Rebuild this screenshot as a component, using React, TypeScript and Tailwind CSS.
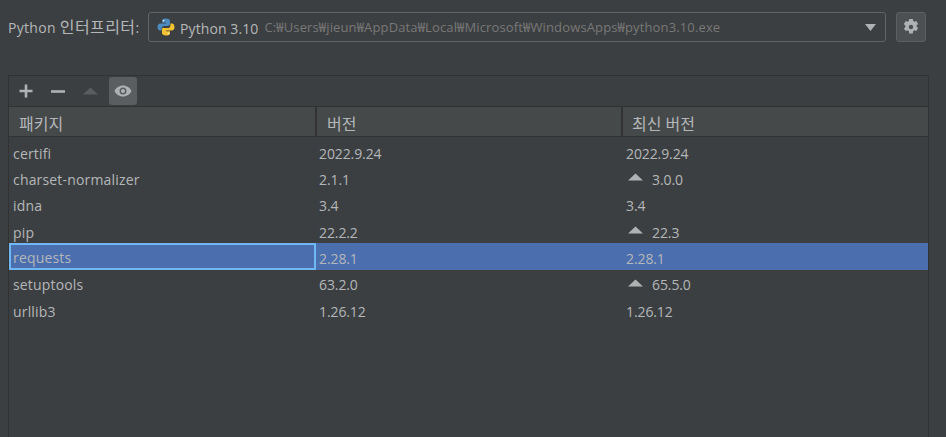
const font = { fontFamily: '"Open Sans", "Noto Sans CJK KR", sans-serif' };

const packages = [
  { name: 'certifi', version: '2022.9.24', latest: '2022.9.24' },
  { name: 'charset-normalizer', version: '2.1.1', latest: '3.0.0', upgrade: true },
  { name: 'idna', version: '3.4', latest: '3.4' },
  { name: 'pip', version: '22.2.2', latest: '22.3', upgrade: true },
  { name: 'requests', version: '2.28.1', latest: '2.28.1', selected: true },
  { name: 'setuptools', version: '63.2.0', latest: '65.5.0', upgrade: true },
  { name: 'urllib3', version: '1.26.12', latest: '1.26.12' },
];

function PythonLogo() {
  return (
    <svg width="18" height="18" viewBox="0 0 18 18">
      <path d="M8.9 0.5C5.2 0.5 5 2 5 3v1.8h4v.7H3.1C1.5 5.5 0.5 6.9 0.5 9s1 3.6 2.6 3.6H4.6v-2c0-1.5 1.2-2.7 2.7-2.7h3.6c1.2 0 2.1-1 2.1-2.2V3c0-1.3-1.3-2.5-4.1-2.5z" fill="#4b8bbe" />
      <circle cx="6.6" cy="2.6" r="0.8" fill="#e8eef2" />
      <path d="M9.1 17.5c3.7 0 3.9-1.5 3.9-2.5v-1.8H9v-.7h5.9c1.6 0 2.6-1.4 2.6-3.5s-1-3.6-2.6-3.6h-1.5v2c0 1.5-1.2 2.7-2.7 2.7H7.1C5.9 9.1 5 10.1 5 11.3V15c0 1.3 1.3 2.5 4.1 2.5z" fill="#f2c230" />
      <circle cx="11.4" cy="15.4" r="0.8" fill="#f5efd5" />
    </svg>
  );
}

function Gear() {
  return (
    <svg width="16" height="16" viewBox="0 0 16 16">
      <path
        fillRule="evenodd"
        d="M6.2 0h3.6l.4 2.1 1.1.6 2-.7 1.8 3.1-1.6 1.4v1l1.6 1.400-1.800 3.100-2-.7-1.100.6-.4 2.500H6.200l-.4-2.500-1.100-.6-2 .7L.9 9.500l1.600-1.400v-1L.9 5.100 2.700 2l2 .7 1.100-.6zM8 5.800a2.200 2.200 0 1 0 0 4.400 2.200 2.200 0 0 0 0-4.400z"
        fill="#afb1b3"
      />
    </svg>
  );
}

function UpArrow({ color = '#afb1b3' }: { color?: string }) {
  return (
    <svg width="15" height="8" viewBox="0 0 15 8">
      <path d="M7.5 0.5L15 7.5H0z" fill={color} />
    </svg>
  );
}

function Eye() {
  return (
    <svg width="18" height="12" viewBox="0 0 18 12">
      <path
        fillRule="evenodd"
        d="M9 0.5c3.8 0 7 2.3 8.5 5.5-1.5 3.2-4.7 5.500-8.500 5.500S2 9.200 0.500 6C2 2.800 5.200 0.500 9 0.500zM9 2.500a3.500 3.500 0 1 0 0 7 3.500 3.500 0 0 0 0-7z"
        fill="#afb1b3"
      />
      <circle cx="9" cy="6" r="2" fill="#afb1b3" />
    </svg>
  );
}

export default function App() {
  return (
    <div className="w-[946px] h-[437px] bg-[#3c3f41] overflow-hidden flex flex-col text-[14px] text-[#b4b7b9]" style={font}>
      <div className="flex items-center pl-2 pt-3 h-[42px]">
        <span className="w-[140px] whitespace-nowrap tracking-[0.3px]">
          Python <span className="text-[16px] tracking-[0.4px]">인터프리터</span>:
        </span>
        <div className="w-[738px] h-[30px] flex items-center border border-[#646464] rounded-[3px] bg-[#3c3f41] pl-[8px] pr-[9px]">
          <PythonLogo />
          <span className="ml-[5px] pt-[2px] whitespace-nowrap tracking-[0.1px]">Python 3.10</span>
          <span className="ml-[6px] pt-[2px] text-[13px] tracking-[0.14px] text-[#787878] whitespace-nowrap">C:₩Users₩jieun₩AppData₩Local₩Microsoft₩WindowsApps₩python3.10.exe</span>
          <svg className="ml-auto" width="11" height="7" viewBox="0 0 11 7">
            <path d="M0 0h11L5.5 7z" fill="#afb1b3" />
          </svg>
        </div>
        <button className="ml-[10px] w-[30px] h-[30px] flex items-center justify-center rounded-[3px] border border-[#5e6060] bg-[#4c5052]">
          <Gear />
        </button>
      </div>

      <div className="mt-[33px] ml-2 w-[921px] flex-1 border border-[#323232] border-b-0 flex flex-col">
        <div className="h-[30px] flex items-center gap-[4px] pl-[3px] shrink-0">
          <span className="w-[28px] h-[28px] flex items-center justify-center">
            <svg width="14" height="14" viewBox="0 0 14 14">
              <path d="M5.7 0.5h2.6v5.2h5.2v2.6H8.3v5.2H5.7V8.3H0.5V5.7h5.2z" fill="#afb1b3" />
            </svg>
          </span>
          <span className="w-[28px] h-[28px] flex items-center justify-center">
            <svg width="14" height="3" viewBox="0 0 14 3">
              <rect width="14" height="2.6" y="0.2" fill="#afb1b3" />
            </svg>
          </span>
          <span className="w-[28px] h-[28px] flex items-center justify-center">
            <UpArrow color="#5a5d5f" />
          </span>
          <span className="w-[28px] h-[28px] ml-[1px] flex items-center justify-center rounded-[3px] bg-[#5a5e61]">
            <Eye />
          </span>
        </div>

        <div className="h-[31px] shrink-0 grid grid-cols-[308px_306px_1fr] items-center bg-[#45494a] border-y border-[#323232] text-[16px]">
          <div className="h-full flex items-center pl-[10px] pt-[4px] border-r-2 border-[#323232]">패키지</div>
          <div className="h-full flex items-center pl-[10px] pt-[4px] border-r-2 border-[#323232]">버전</div>
          <div className="pl-[9px] pt-[4px]">최신 버전</div>
        </div>

        <div className="flex flex-col mt-[1px]">
          {packages.map((p) => (
            <div
              key={p.name}
              className={`h-[26.33px] shrink-0 grid grid-cols-[307px_307px_1fr] items-center ${p.selected ? 'bg-[#4b6eaf]' : ''}`}
            >
              <div className={`h-full flex items-center tracking-[0.17px] ${p.selected ? 'border-2 border-[#6fb8f4] pt-[2px] pl-[2px]' : 'pt-[4px] pl-[4px]'}`}>{p.name}</div>
              <div className="pl-[3px] pt-[4px] tracking-[-0.1px]">{p.version}</div>
              <div className="pl-[3px] pt-[4px] flex items-center tracking-[-0.1px]">
                {p.upgrade && (
                  <span className="mr-[9px] ml-[2px] -mt-[4px] flex">
                    <UpArrow />
                  </span>
                )}
                {p.latest}
              </div>
            </div>
          ))}
        </div>
      </div>
    </div>
  );
}
